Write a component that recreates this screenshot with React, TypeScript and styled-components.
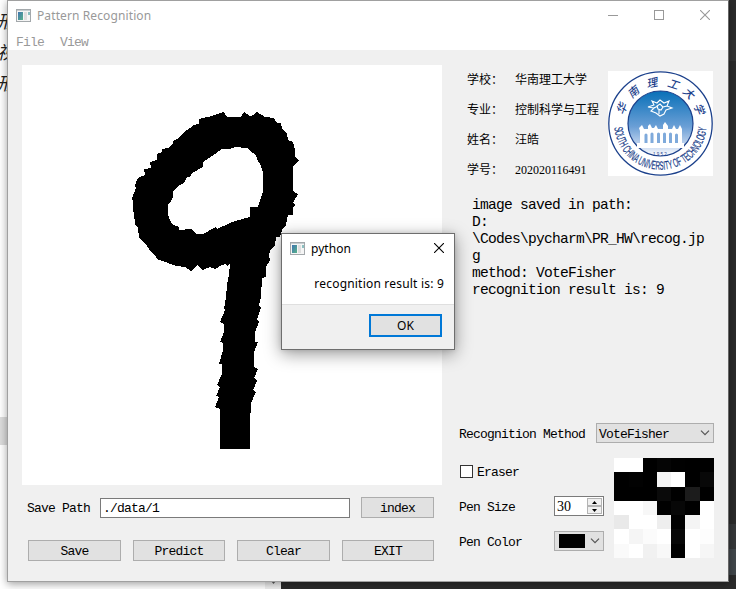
import React from "react";
import styled, { createGlobalStyle } from "styled-components";

const Global = createGlobalStyle`
  *, *::before, *::after { box-sizing: border-box; }
  html, body { margin: 0; padding: 0; overflow: hidden; }
`;

const mono = `"Liberation Mono", "Noto Sans CJK SC", monospace`;
const sans = `"Noto Sans", "Noto Sans CJK SC", sans-serif`;

const Desktop = styled.div`
  position: relative;
  width: 736px;
  height: 589px;
  overflow: hidden;
  display: grid;
  background: #fff;
  > * { grid-area: 1 / 1; }
`;

const Backdrop = styled.div`
  display: grid;
  grid-template-columns: 265px 16px 1fr;
`;

const Editor = styled.div`
  display: flex;
  flex-direction: column;
  background: #fff;
`;

const EditorText = styled.div`
  height: 417px;
  padding-top: 5px;
  margin-left: -3px;
  font: italic 18px/31px "Noto Sans CJK SC", sans-serif;
  color: #222;
  > div { width: 20px; }
`;

const EditorThumb = styled.div`
  width: 8px;
  height: 28px;
  background: #dcdcdc;
`;

const ScrollStrip = styled.div`
  display: flex;
  align-items: flex-end;
  justify-content: center;
  padding-bottom: 4px;
  background: #f0f0f0;
`;

const DarkPane = styled.div`
  display: flex;
  flex-direction: column;
  background: #2b2b2b;
`;

const DarkBand = styled.div<{ $h: number; $bg: string }>`
  height: ${(p) => p.$h}px;
  background: ${(p) => p.$bg};
`;

const Window = styled.div`
  position: relative;
  margin-left: 7px;
  width: 722px;
  height: 582px;
  border: 1px solid #a0a0a0;
  border-right-color: #666;
  background: #f0f0f0;
  box-shadow: 0 2px 8px rgba(0, 0, 0, 0.38);
`;

const TitleBar = styled.div`
  display: flex;
  align-items: center;
  height: 29px;
  padding: 0 18px 0 8px;
  background: #fff;
`;

const Title = styled.span<{ $dim?: boolean }>`
  flex: 1;
  margin-left: 6px;
  margin-top: ${(p) => (p.$dim ? 0 : 2)}px;
  font: 12px/16px ${sans};
  letter-spacing: ${(p) => (p.$dim ? "0.11px" : "0.05px")};
  color: ${(p) => (p.$dim ? "#999" : "#000")};
`;

const WindowActions = styled.div`
  display: flex;
  gap: 36px;
  margin-top: -1px;
`;

const MenuBar = styled.div`
  display: flex;
  gap: 16px;
  height: 20px;
  padding: 4px 8px 0;
  background: #fff;
`;

const Label = styled.span<{ $color?: string; $top?: number }>`
  font: 13px/16px ${mono};
  letter-spacing: -0.8px;
  color: ${(p) => p.$color ?? "#000"};
  white-space: pre;
  margin-top: ${(p) => p.$top ?? 0}px;
`;

const Body = styled.div`
  display: grid;
  grid-template-columns: 420px 272px;
  column-gap: 0;
  padding: 15px 14px 0;
`;

const LeftColumn = styled.div`
  display: flex;
  flex-direction: column;
`;

const Canvas = styled.div`
  width: 420px;
  height: 420px;
  background: #fff;
  svg { display: block; }
`;

const PathRow = styled.div`
  display: flex;
  align-items: center;
  margin-top: 12px;
  padding-left: 5px;
  height: 21px;
`;

const TextInput = styled.div`
  width: 250px;
  height: 20px;
  margin: 0 11px 0 10px;
  padding: 2px 2px;
  border: 1px solid #7a7a7a;
  background: #fff;
  display: flex;
  align-items: center;
`;

const Button = styled.button<{ $w: number }>`
  width: ${(p) => p.$w}px;
  height: 21px;
  padding: 3px 0 0;
  border: 1px solid #adadad;
  background: #e1e1e1;
  font: 13px/16px ${mono};
  letter-spacing: -0.8px;
  color: #000;
`;

const ButtonRow = styled.div`
  display: flex;
  justify-content: space-between;
  margin-top: 22px;
  padding: 0 8px 0 6px;
`;

const RightColumn = styled.div`
  display: flex;
  flex-direction: column;
`;

const Profile = styled.div`
  display: flex;
  justify-content: space-between;
  height: 128px;
  padding: 0 1px 0 25px;
`;

const Info = styled.dl`
  display: grid;
  grid-template-columns: 48px auto;
  grid-auto-rows: 30px;
  margin: 0;
  font: 12px/28px "Noto Sans CJK SC", sans-serif;
  color: #000;
  dt, dd { margin: 0; white-space: nowrap; }
`;

const StudentNo = styled.span`
  font: 12px/28px "Liberation Serif", serif;
`;

const PenSize = styled.span`
  font: 14px/16px "Liberation Serif", serif;
  color: #000;
  margin-top: 1px;
`;

const Crest = styled.div`
  margin: 6px 0 0;
  width: 105px;
  height: 105px;
  background: #fff;
  svg { display: block; }
`;

const Log = styled.div`
  margin: 4px 0 0 30px;
  height: 226px;
  font: 14.6px/17px ${mono};
  letter-spacing: -0.76px;
  color: #000;
  white-space: pre;
`;

const Controls = styled.div`
  display: flex;
  flex-direction: column;
  padding-left: 17px;
`;

const Row = styled.div`
  display: flex;
  align-items: center;
  justify-content: space-between;
  height: 20px;
`;

const Select = styled.div<{ $w: number; $pad: number }>`
  display: flex;
  align-items: center;
  justify-content: space-between;
  width: ${(p) => p.$w}px;
  height: 20px;
  padding: 0 3px 0 ${(p) => p.$pad}px;
  border: 1px solid #adadad;
  background: #e1e1e1;
`;

const LowerControls = styled.div`
  display: flex;
  justify-content: space-between;
  margin-top: 15px;
`;

const PenOptions = styled.div`
  width: 145px;
  display: flex;
  flex-direction: column;
  padding-top: 3px;
  gap: 15px;
`;

const CheckRow = styled.div`
  display: flex;
  align-items: center;
  gap: 4px;
  height: 20px;
  padding-left: 1px;
`;

const Checkbox = styled.div`
  width: 13px;
  height: 13px;
  margin-top: 1px;
  border: 1px solid #333;
  background: #fff;
`;

const Swatch = styled.div`
  width: 26px;
  height: 14px;
  background: #000;
`;

const Spin = styled.div`
  display: flex;
  justify-content: space-between;
  width: 50px;
  height: 20px;
  padding: 1px 1px 1px 2px;
  border: 1px solid #7a7a7a;
  background: #fff;
`;

const SpinArrows = styled.div`
  display: grid;
  grid-template-rows: 1fr 1fr;
  width: 15px;
`;

const SpinArrow = styled.div`
  display: flex;
  align-items: center;
  justify-content: center;
  border: 1px solid #b4b4b4;
  background: #f0f0f0;
`;

const Preview = styled.div`
  display: grid;
  grid-template-columns: 15px 14px 14px 14px 14px 15px 14px;
  grid-template-rows: 14px 15px 14px 14px 14px 15px 14px;
  width: 100px;
  height: 100px;
`;

const PreviewCell = styled.div<{ $v: number }>`
  background: rgb(${(p) => `${p.$v}, ${p.$v}, ${p.$v}`});
`;

const Dialog = styled.div`
  position: absolute;
  left: 281px;
  top: 233px;
  width: 174px;
  height: 117px;
  display: flex;
  flex-direction: column;
  border: 1px solid #6e6e6e;
  background: #fff;
  box-shadow: 0 4px 16px rgba(0, 0, 0, 0.4), 0 0 5px rgba(0, 0, 0, 0.12);
`;

const DialogBar = styled.div`
  display: flex;
  align-items: center;
  height: 28px;
  padding: 0 10px 0 8px;
`;

const DialogMessage = styled.p`
  flex: 1;
  margin: 0;
  padding: 14px 10px 0 0;
  font: 12px/16px ${sans};
  letter-spacing: 0.2px;
  text-align: right;
  color: #000;
  white-space: nowrap;
`;

const DialogFooter = styled.div`
  display: flex;
  justify-content: flex-end;
  height: 45px;
  padding: 9px 12px 0 0;
  border-top: 1px solid #dfdfdf;
  background: #f0f0f0;
`;

const OkButton = styled.button`
  width: 73px;
  height: 23px;
  padding: 0;
  border: 2px solid #0078d7;
  background: #e1e1e1;
  font: 12px/16px ${sans};
  color: #000;
`;

function AppIcon() {
  return (
    <svg width="15" height="13" viewBox="0 0 15 13" shapeRendering="crispEdges">
      <defs>
        <linearGradient id="appPane" x1="0" y1="0" x2="1" y2="1">
          <stop offset="0" stopColor="#3f74b0" />
          <stop offset="1" stopColor="#58b28a" />
        </linearGradient>
      </defs>
      <rect x=".5" y=".5" width="14" height="12" fill="#f5f5f5" stroke="#a3a8ab" />
      <rect x="1" y="1" width="13" height="1" fill="#c6cdd0" />
      <rect x="2" y="3" width="5" height="8" fill="url(#appPane)" />
      <rect x="8" y="3" width="3" height="8" fill="#dedede" />
      <rect x="12" y="3" width="2" height="3" fill="#8bbfc0" />
    </svg>
  );
}

function Cross({ color }: { color: string }) {
  return (
    <svg width="10" height="10" viewBox="0 0 10 10">
      <path d="M0 0L10 10M10 0L0 10" stroke={color} strokeWidth="1.1" />
    </svg>
  );
}

function Chevron() {
  return (
    <svg width="10" height="6" viewBox="0 0 10 6">
      <path d="M1 .7L5 4.7L9 .7" fill="none" stroke="#555" strokeWidth="1.2" />
    </svg>
  );
}

const OUTER =
  "M220 113L224 112L227 117H241L244 112L250 116L253 115L257 112L265 117L274 118L277 123H281L282 129L287 133L288 140L293 142L295 150V157L299 160L293 167V191L298 194L293 203L295 205L293 208V215H288L286 225L282 230L280 237H276L275 246L270 250L269 256L270 260L266 267V277L262 278L261 297L259 305L261 308L257 320L259 322L255 332V342H258L254 352V367L258 369L254 378L257 381L253 390L256 392L251 403V413H250V449H220V409L215 407L219 397L216 396L220 387L217 385L222 374V364H219L223 350V343L220 342L224 332V324L220 322L225 310L224 309L226 297L227 285L229 275L230 264L227 266L225 264L222 265L215 269L210 267L203 270L197 265L191 271L185 267L176 266L168 263L157 259L155 255L152 253L147 246L139 238L138 228L135 225L134 213L133 211V202L132 198L136 188L135 185L138 178L145 175L144 169L151 168L150 162L157 160V154L162 152V149L168 148L173 143V141L179 138L185 131L192 127L193 125L199 124V119L212 116Z";
const INNER =
  "M235 147L247 148L250 151L256 155L258 162L260 164L263 172V192L258 207H250V217L235 221L230 223L217 229L216 227L203 234H196L191 229L179 230V227L173 225L171 222L168 215V204L170 203L173 197V192L177 187L185 182L186 178L191 176L192 173L203 167V162L212 156L222 149L230 149Z";

function Drawing() {
  return (
    <svg width="420" height="420" viewBox="22 65 420 420" shapeRendering="crispEdges">
      <path fillRule="evenodd" d={`${OUTER}${INNER}`} />
    </svg>
  );
}

const MOTTO: Array<[string, number]> = [
  ["华", -69], ["南", -41], ["理", -12], ["工", 18], ["大", 43], ["学", 69],
];

function University() {
  return (
    <svg width="105" height="105" viewBox="0 0 105 105">
      <defs>
        <linearGradient id="sky" x1="0" y1="0" x2="0" y2="1">
          <stop offset="0" stopColor="#0870b8" />
          <stop offset=".55" stopColor="#6b9fd6" />
          <stop offset=".85" stopColor="#c9d9f0" />
          <stop offset="1" stopColor="#fff" />
        </linearGradient>
        <path id="ring" d="M6.200 52.500A46.300 46.300 0 0 0 98.800 52.500" />
      </defs>
      <circle cx="52.5" cy="52.5" r="51.7" fill="#fff" stroke="#1c418c" strokeWidth="1.3" />
      <circle cx="52.5" cy="52.5" r="32.5" fill="url(#sky)" stroke="#1c418c" strokeWidth="1.2" />
      {MOTTO.map(([ch, deg]) => (
        <text
          key={ch}
          x="52.5"
          y="15"
          fontSize="11"
          fontStyle="italic"
          fontWeight="500"
          fontFamily="'Noto Sans CJK SC', sans-serif"
          textAnchor="middle"
          fill="#1c418c"
          transform={`rotate(${deg} 52.5 52.5)`}
        >
          {ch}
        </text>
      ))}
      <text fontFamily="'Liberation Sans Narrow', 'Liberation Sans', sans-serif" fontSize="12" fill="#173c88" stroke="#173c88" strokeWidth=".2">
        <textPath href="#ring" startOffset="4" textLength="137" lengthAdjust="spacingAndGlyphs">
          SOUTH CHINA UNIVERSITY OF TECHNOLOGY
        </textPath>
      </text>
      <path
        d="M52 29L56 32L61 30L59 35L64 37L58 39L56 43L52 45L48 42L43 40L46 37L40 36L46 34L44 30L49 32ZM52 33L55 36L53 39L50 38L49 35ZM46 37L50 35M55 36L59 35M51 39V43"
        fill="none"
        stroke="#fff"
        strokeWidth="1.1"
      />
      <path
        d="M30 77V72H32V60L31 57L34 54L36 58H40V55L42 53L44 57H46L48 54L50 58H55V54L57 51L60 55V58H64L66 54L68 58H70L72 54L74 58V72H76V77Z"
        fill="#fff"
      />
      <path
        d="M38 72V64M44 72V63M50.500 72V63M56.500 72V63M62.500 72V63M68.500 72V64"
        fill="none"
        stroke="#7faadb"
        strokeWidth="3"
        strokeLinecap="round"
      />
      <path d="M29 72H76V77H29Z" fill="#fff" />
      <text x="52.500" y="84.500" fontSize="4.500" textAnchor="middle" fontFamily="'Liberation Sans', sans-serif" letterSpacing="1.200" fill="#1c418c">1952</text>
    </svg>
  );
}

const CELLS = [
  [255, 255, 0, 5, 1, 0, 0],
  [0, 2, 0, 244, 255, 0, 8],
  [0, 0, 0, 10, 0, 28, 0],
  [255, 255, 247, 0, 7, 0, 255],
  [233, 255, 255, 238, 0, 244, 255],
  [255, 245, 251, 255, 7, 255, 253],
  [250, 255, 241, 248, 0, 255, 246],
];

const PROFILE = [
  ["学校：", "华南理工大学"],
  ["专业：", "控制科学与工程"],
  ["姓名：", "汪皓"],
];

const LOG = `image saved in path:
D:
\\Codes\\pycharm\\PR_HW\\recog.jp
g
method: VoteFisher
recognition result is: 9`;

export default function App() {
  return (
    <>
      <Global />
      <Desktop>
        <Backdrop>
          <Editor>
            <EditorText>
              <div>形</div>
              <div>视</div>
              <div>形</div>
            </EditorText>
            <EditorThumb />
          </Editor>
          <ScrollStrip>
            <svg width="5" height="4"><path d="M0 0H5L2.500 3Z" fill="#606060" /></svg>
          </ScrollStrip>
          <DarkPane>
            <DarkBand $h={40} $bg="#2b2b2b" />
            <DarkBand $h={21} $bg="#333333" />
            <DarkBand $h={463} $bg="#2b2b2b" />
            <DarkBand $h={25} $bg="#36383a" />
            <DarkBand $h={26} $bg="#41474b" />
          </DarkPane>
        </Backdrop>
        <Window>
          <TitleBar>
            <AppIcon />
            <Title $dim>Pattern Recognition</Title>
            <WindowActions>
              <svg width="10" height="10"><path d="M0 5.500H10" stroke="#999" /></svg>
              <svg width="10" height="10"><rect x=".5" y=".5" width="9" height="9" fill="none" stroke="#999" /></svg>
              <Cross color="#999" />
            </WindowActions>
          </TitleBar>
          <MenuBar>
            <Label $color="#999" $top={1}>File</Label>
            <Label $color="#999" $top={1}>View</Label>
          </MenuBar>
          <Body>
            <LeftColumn>
              <Canvas><Drawing /></Canvas>
              <PathRow>
                <Label $top={2}>Save Path</Label>
                <TextInput><Label $top={2}>./data/1</Label></TextInput>
                <Button $w={73}>index</Button>
              </PathRow>
              <ButtonRow>
                <Button $w={93}>Save</Button>
                <Button $w={92}>Predict</Button>
                <Button $w={93}>Clear</Button>
                <Button $w={92}>EXIT</Button>
              </ButtonRow>
            </LeftColumn>
            <RightColumn>
              <Profile>
                <Info>
                  {PROFILE.map(([k, v]) => (
                    <React.Fragment key={k}>
                      <dt>{k}</dt>
                      <dd>{v}</dd>
                    </React.Fragment>
                  ))}
                  <dt>学号：</dt>
                  <dd><StudentNo>202020116491</StudentNo></dd>
                </Info>
                <Crest><University /></Crest>
              </Profile>
              <Log>{LOG}</Log>
              <Controls>
                <Row>
                  <Label $top={4}>Recognition Method</Label>
                  <Select $w={118} $pad={2}>
                    <Label $top={3}>VoteFisher</Label>
                    <Chevron />
                  </Select>
                </Row>
                <LowerControls>
                  <PenOptions>
                    <CheckRow>
                      <Checkbox />
                      <Label $top={4}>Eraser</Label>
                    </CheckRow>
                    <Row>
                      <Label $top={4}>Pen Size</Label>
                      <Spin>
                        <PenSize>30</PenSize>
                        <SpinArrows>
                          <SpinArrow><svg width="5" height="3"><path d="M0 3L2.500 0L5 3Z" /></svg></SpinArrow>
                          <SpinArrow><svg width="5" height="3"><path d="M0 0L2.500 3L5 0Z" /></svg></SpinArrow>
                        </SpinArrows>
                      </Spin>
                    </Row>
                    <Row>
                      <Label $top={4}>Pen Color</Label>
                      <Select $w={50} $pad={4}>
                        <Swatch />
                        <Chevron />
                      </Select>
                    </Row>
                  </PenOptions>
                  <Preview>
                    {CELLS.flat().map((v, i) => <PreviewCell key={i} $v={v} />)}
                  </Preview>
                </LowerControls>
              </Controls>
            </RightColumn>
          </Body>
        </Window>
        <Dialog>
          <DialogBar>
            <AppIcon />
            <Title>python</Title>
            <Cross color="#000" />
          </DialogBar>
          <DialogMessage>recognition result is: 9</DialogMessage>
          <DialogFooter><OkButton>OK</OkButton></DialogFooter>
        </Dialog>
      </Desktop>
    </>
  );
}
